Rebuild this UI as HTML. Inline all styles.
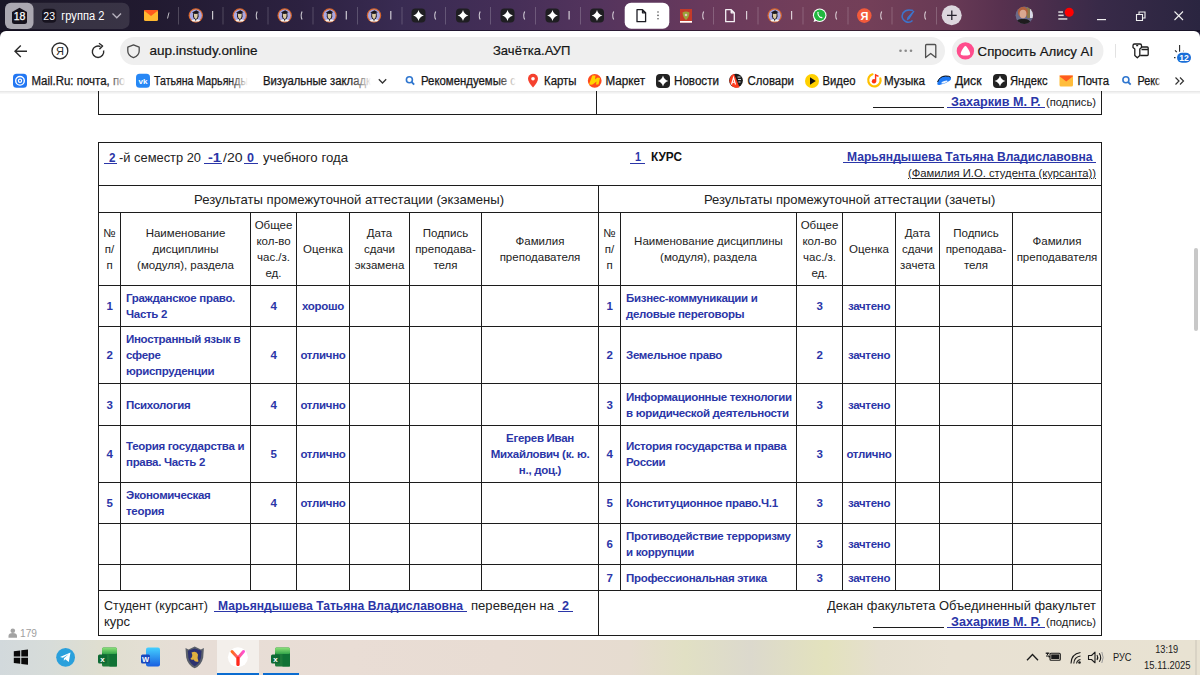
<!DOCTYPE html>
<html><head><meta charset="utf-8">
<style>
*{box-sizing:border-box}
html,body{margin:0;padding:0}
body{width:1200px;height:675px;overflow:hidden;position:relative;background:#fff;font-family:"Liberation Sans",sans-serif;color:#222}
.a{position:absolute}
.t{position:absolute;white-space:nowrap;line-height:20px;font-family:"Liberation Sans",sans-serif}
#tabs{left:0;top:0;width:1200px;height:44px;background:linear-gradient(90deg,#1b1727 0.00%,#211a30 12.50%,#2c2140 25.00%,#392b52 33.33%,#442e57 41.67%,#54345d 50.00%,#68395c 58.33%,#723e5a 66.67%,#733f58 72.50%,#683a55 79.17%,#58314f 83.33%,#382a48 91.67%,#2a2540 100.00%)}
#chrome{left:0;top:31px;width:1200px;height:60px;background:#fff;border-radius:6px 6px 0 0}
#bmline{left:0;top:91px;width:1200px;height:3px;background:linear-gradient(#e4e4e4,#f1f1f1 50%,#fafafa)}
.hl{position:absolute;height:1px;background:#1c1c1c}
.vl{position:absolute;width:1px;background:#1c1c1c}
.c{position:absolute;display:flex;align-items:center;justify-content:center;text-align:center;color:#222}
.hd{font-size:11.5px;line-height:16px}
.b{color:#2b36a8;font-weight:bold;font-size:11.5px;line-height:16px;letter-spacing:-0.3px}
.l{justify-content:flex-start;text-align:left;padding-left:5px}
#task{left:0;top:640px;width:1200px;height:35px;background:linear-gradient(90deg,#d9dde0 0%,#dcddd6 15%,#e3dfd2 35%,#e6e2d4 55%,#e2ddd0 75%,#ddd8cc 100%)}
</style></head><body>
<div id="tabs" class="a"></div>
<div class="a" style="left:0;top:29.5px;width:1200px;height:2px;background:rgba(10,5,20,.55)"></div>
<div id="chrome" class="a"></div>
<div id="bmline" class="a"></div>
<svg class="a" style="left:0;top:0" width="1200" height="92" viewBox="0 0 1200 92" font-family="Liberation Sans, sans-serif"><rect x="20" y="2.7" width="109.5" height="26.2" rx="7" fill="#fff" fill-opacity="0.115"/>
<rect x="5" y="2.7" width="28.5" height="26.2" rx="6" fill="#aba8b1"/>
<path d="M12,12 L19.5,7.8 L27,12 V21.5 Q27,24 24.5,24 H14.5 Q12,24 12,21.5Z" fill="#16121d"/>
<text x="19.6" y="20" font-size="10.5" fill="#fff" stroke="#fff" stroke-width="0.25" text-anchor="middle">18</text>
<rect x="42" y="8.8" width="14.3" height="14" rx="4" fill="#17131f"/>
<text x="49.2" y="20.2" font-size="10.5" fill="#fff" text-anchor="middle">23</text>
<text x="61.3" y="20.3" font-size="12.5" fill="#fff" textLength="43" lengthAdjust="spacingAndGlyphs">группа 2</text>
<path d="M112.5,13.5 L116.8,17.8 L121,13.5" stroke="#b9b4c0" stroke-width="1.3" fill="none"/>
<rect x="144" y="10" width="14" height="11" rx="1.5" fill="#ffb830"/><path d="M144,10.5 L151,16 L158,10.5 V10 H144Z" fill="#ff5a1e"/>
<path d="M167.5,18.5 L169,12.5" stroke="#fff" stroke-opacity="0.7" stroke-width="1"/>
<rect x="178" y="7" width="1" height="17.5" fill="#fff" fill-opacity="0.2"/>
<rect x="222.5" y="7" width="1" height="17.5" fill="#fff" fill-opacity="0.2"/>
<rect x="267.5" y="7" width="1" height="17.5" fill="#fff" fill-opacity="0.2"/>
<rect x="312.5" y="7" width="1" height="17.5" fill="#fff" fill-opacity="0.2"/>
<rect x="357" y="7" width="1" height="17.5" fill="#fff" fill-opacity="0.2"/>
<rect x="401.5" y="7" width="1" height="17.5" fill="#fff" fill-opacity="0.2"/>
<rect x="445" y="7" width="1" height="17.5" fill="#fff" fill-opacity="0.2"/>
<rect x="490" y="7" width="1" height="17.5" fill="#fff" fill-opacity="0.2"/>
<rect x="535" y="7" width="1" height="17.5" fill="#fff" fill-opacity="0.2"/>
<rect x="580" y="7" width="1" height="17.5" fill="#fff" fill-opacity="0.2"/>
<rect x="713" y="7" width="1" height="17.5" fill="#fff" fill-opacity="0.2"/>
<rect x="757.5" y="7" width="1" height="17.5" fill="#fff" fill-opacity="0.2"/>
<rect x="802.5" y="7" width="1" height="17.5" fill="#fff" fill-opacity="0.2"/>
<rect x="847.5" y="7" width="1" height="17.5" fill="#fff" fill-opacity="0.2"/>
<rect x="891.5" y="7" width="1" height="17.5" fill="#fff" fill-opacity="0.2"/>
<rect x="936" y="7" width="1" height="17.5" fill="#fff" fill-opacity="0.2"/>
<g transform="translate(195.8,15.5)"><circle r="7.2" fill="#d8662c"/><circle r="6" fill="#a9a8e4"/>
<path d="M-2.6,-2.5 L2.6,-2.5 L2.8,1 Q2.5,3.8 0,4 Q-2.5,3.8 -2.8,1Z" fill="#1e1a22"/><path d="M-1.9,-1.8 Q-2,3.2 0,3.4 Q2,3.2 1.9,-1.8Z" fill="#dcc9a2"/><path d="M-3.8,-3 L0.5,-5.3 L3.8,-3.3 L0,-1.8Z" fill="#1a161e"/>
<path d="M-4.5,4.8 Q0,2.6 4.5,4.8 L3,6 L-3,6Z" fill="#f2f2f2"/><path d="M-0.8,3.6 L0,6 L0.8,3.6Z" fill="#222"/></g>
<rect x="212.0" y="11" width="1.2" height="8.5" fill="#fff" fill-opacity="0.75"/>
<g transform="translate(239.8,15.5)"><circle r="7.2" fill="#d8662c"/><circle r="6" fill="#a9a8e4"/>
<path d="M-2.6,-2.5 L2.6,-2.5 L2.8,1 Q2.5,3.8 0,4 Q-2.5,3.8 -2.8,1Z" fill="#1e1a22"/><path d="M-1.9,-1.8 Q-2,3.2 0,3.4 Q2,3.2 1.9,-1.8Z" fill="#dcc9a2"/><path d="M-3.8,-3 L0.5,-5.3 L3.8,-3.3 L0,-1.8Z" fill="#1a161e"/>
<path d="M-4.5,4.8 Q0,2.6 4.5,4.8 L3,6 L-3,6Z" fill="#f2f2f2"/><path d="M-0.8,3.6 L0,6 L0.8,3.6Z" fill="#222"/></g>
<path d="M257.2,11.5 Q255.2,15.5 257.2,19.5" stroke="#fff" stroke-opacity="0.75" stroke-width="1.1" fill="none"/>
<g transform="translate(284.7,15.5)"><circle r="7.2" fill="#d8662c"/><circle r="6" fill="#a9a8e4"/>
<path d="M-2.6,-2.5 L2.6,-2.5 L2.8,1 Q2.5,3.8 0,4 Q-2.5,3.8 -2.8,1Z" fill="#1e1a22"/><path d="M-1.9,-1.8 Q-2,3.2 0,3.4 Q2,3.2 1.9,-1.8Z" fill="#dcc9a2"/><path d="M-3.8,-3 L0.5,-5.3 L3.8,-3.3 L0,-1.8Z" fill="#1a161e"/>
<path d="M-4.5,4.8 Q0,2.6 4.5,4.8 L3,6 L-3,6Z" fill="#f2f2f2"/><path d="M-0.8,3.6 L0,6 L0.8,3.6Z" fill="#222"/></g>
<path d="M302.09999999999997,11.5 Q300.09999999999997,15.5 302.09999999999997,19.5" stroke="#fff" stroke-opacity="0.75" stroke-width="1.1" fill="none"/>
<g transform="translate(329.5,15.5)"><circle r="7.2" fill="#d8662c"/><circle r="6" fill="#a9a8e4"/>
<path d="M-2.6,-2.5 L2.6,-2.5 L2.8,1 Q2.5,3.8 0,4 Q-2.5,3.8 -2.8,1Z" fill="#1e1a22"/><path d="M-1.9,-1.8 Q-2,3.2 0,3.4 Q2,3.2 1.9,-1.8Z" fill="#dcc9a2"/><path d="M-3.8,-3 L0.5,-5.3 L3.8,-3.3 L0,-1.8Z" fill="#1a161e"/>
<path d="M-4.5,4.8 Q0,2.6 4.5,4.8 L3,6 L-3,6Z" fill="#f2f2f2"/><path d="M-0.8,3.6 L0,6 L0.8,3.6Z" fill="#222"/></g>
<rect x="345.7" y="11" width="1.2" height="8.5" fill="#fff" fill-opacity="0.75"/>
<g transform="translate(374,15.5)"><circle r="7.2" fill="#d8662c"/><circle r="6" fill="#a9a8e4"/>
<path d="M-2.6,-2.5 L2.6,-2.5 L2.8,1 Q2.5,3.8 0,4 Q-2.5,3.8 -2.8,1Z" fill="#1e1a22"/><path d="M-1.9,-1.8 Q-2,3.2 0,3.4 Q2,3.2 1.9,-1.8Z" fill="#dcc9a2"/><path d="M-3.8,-3 L0.5,-5.3 L3.8,-3.3 L0,-1.8Z" fill="#1a161e"/>
<path d="M-4.5,4.8 Q0,2.6 4.5,4.8 L3,6 L-3,6Z" fill="#f2f2f2"/><path d="M-0.8,3.6 L0,6 L0.8,3.6Z" fill="#222"/></g>
<rect x="390.2" y="11" width="1.2" height="8.5" fill="#fff" fill-opacity="0.75"/>
<rect x="411.5" y="8.5" width="14" height="14" rx="3.9" fill="#1f1e22"/>
<path d="M418.5,10.1 Q419.6,14.4 423.9,15.5 Q419.6,16.6 418.5,20.9 Q417.4,16.6 413.1,15.5 Q417.4,14.4 418.5,10.1Z" fill="#fff"/>
<path d="M435.7,11.5 Q433.7,15.5 435.7,19.5" stroke="#fff" stroke-opacity="0.75" stroke-width="1.1" fill="none"/>
<rect x="456" y="8.5" width="14" height="14" rx="3.9" fill="#1f1e22"/>
<path d="M463,10.1 Q464.1,14.4 468.4,15.5 Q464.1,16.6 463,20.9 Q461.9,16.6 457.6,15.5 Q461.9,14.4 463,10.1Z" fill="#fff"/>
<path d="M480.2,11.5 Q478.2,15.5 480.2,19.5" stroke="#fff" stroke-opacity="0.75" stroke-width="1.1" fill="none"/>
<rect x="500.5" y="8.5" width="14" height="14" rx="3.9" fill="#1f1e22"/>
<path d="M507.5,10.1 Q508.6,14.4 512.9,15.5 Q508.6,16.6 507.5,20.9 Q506.4,16.6 502.1,15.5 Q506.4,14.4 507.5,10.1Z" fill="#fff"/>
<path d="M524.7,11.5 Q522.7,15.5 524.7,19.5" stroke="#fff" stroke-opacity="0.75" stroke-width="1.1" fill="none"/>
<rect x="545.5" y="8.5" width="14" height="14" rx="3.9" fill="#1f1e22"/>
<path d="M552.5,10.1 Q553.6,14.4 557.9,15.5 Q553.6,16.6 552.5,20.9 Q551.4,16.6 547.1,15.5 Q551.4,14.4 552.5,10.1Z" fill="#fff"/>
<rect x="568.5" y="11" width="1.2" height="8.5" fill="#fff" fill-opacity="0.75"/>
<rect x="590" y="8.5" width="14" height="14" rx="3.9" fill="#1f1e22"/>
<path d="M597,10.1 Q598.1,14.4 602.4,15.5 Q598.1,16.6 597,20.9 Q595.9,16.6 591.6,15.5 Q595.9,14.4 597,10.1Z" fill="#fff"/>
<path d="M613.7,11.5 Q611.7,15.5 613.7,19.5" stroke="#fff" stroke-opacity="0.75" stroke-width="1.1" fill="none"/>
<rect x="624.7" y="2.7" width="44.6" height="26" rx="6.5" fill="#fff"/>
<path d="M637.0,9.7 H642.5 L645.6,12.799999999999999 V21.7 H637.0Z M642.5,9.7 V12.799999999999999 H645.6" stroke="#1d1d24" stroke-width="1.3" fill="none" stroke-linejoin="round"/>
<circle cx="658" cy="12" r="0.8" fill="#555"/><circle cx="658" cy="15.4" r="0.8" fill="#555"/><circle cx="658" cy="18.8" r="0.8" fill="#555"/>
<rect x="680" y="9" width="12" height="13.7" fill="#c33a2a"/><path d="M682.5,12.5 Q686,10.5 689.5,12.5 Q689,18 686,20 Q683,18 682.5,12.5Z" fill="#9aa23a"/><circle cx="686" cy="15" r="1.3" fill="#e8c0c0"/><rect x="680" y="21" width="12" height="1.7" fill="#fff"/>
<path d="M703.7,11.5 Q701.7,15.5 703.7,19.5" stroke="#fff" stroke-opacity="0.75" stroke-width="1.1" fill="none"/>
<path d="M725.7,9.7 H731.2 L734.3000000000001,12.799999999999999 V21.7 H725.7Z M731.2,9.7 V12.799999999999999 H734.3000000000001" stroke="#f4f0f4" stroke-width="1.3" fill="none" stroke-linejoin="round"/>
<rect x="746" y="11" width="1.2" height="8.5" fill="#fff" fill-opacity="0.75"/>
<g transform="translate(774.7,15.5)"><circle r="7.2" fill="#d8662c"/><circle r="6" fill="#a9a8e4"/>
<path d="M-2.6,-2.5 L2.6,-2.5 L2.8,1 Q2.5,3.8 0,4 Q-2.5,3.8 -2.8,1Z" fill="#1e1a22"/><path d="M-1.9,-1.8 Q-2,3.2 0,3.4 Q2,3.2 1.9,-1.8Z" fill="#dcc9a2"/><path d="M-3.8,-3 L0.5,-5.3 L3.8,-3.3 L0,-1.8Z" fill="#1a161e"/>
<path d="M-4.5,4.8 Q0,2.6 4.5,4.8 L3,6 L-3,6Z" fill="#f2f2f2"/><path d="M-0.8,3.6 L0,6 L0.8,3.6Z" fill="#222"/></g>
<rect x="791" y="11" width="1.2" height="8.5" fill="#fff" fill-opacity="0.75"/>
<circle cx="819.7" cy="15.3" r="6.8" fill="#fff"/><circle cx="819.7" cy="15.3" r="5.7" fill="#22b73f"/><path d="M813.5,22 L814.7,18.5 L817,20.8Z" fill="#fff"/><path d="M817.3,12.3 Q817,15.6 819.5,17.6 Q821.5,18.8 822.6,18 L822,16.8 L820.8,17 Q818.6,15.5 818.4,13.5 L818.8,12.6 L818,11.8Z" fill="#fff"/>
<path d="M836.7,11.5 Q834.7,15.5 836.7,19.5" stroke="#fff" stroke-opacity="0.75" stroke-width="1.1" fill="none"/>
<circle cx="864.3" cy="15.6" r="7.3" fill="#f35a3b"/><text x="864.5" y="19.8" font-size="11" font-weight="bold" fill="#fff" text-anchor="middle">Я</text>
<path d="M881.7,11.5 Q879.7,15.5 881.7,19.5" stroke="#fff" stroke-opacity="0.75" stroke-width="1.1" fill="none"/>
<path d="M913,10.5 Q906,8.5 903,13 Q900.5,18.5 905.5,21.5 Q909.5,23.5 912.5,20.5" stroke="#3d74cc" stroke-width="1.5" fill="none"/><path d="M914,11 L909,18.5 L907.5,19.5 L908,17.5Z" fill="#3d74cc" stroke="#3d74cc" stroke-width="1.2"/>
<path d="M925.7,11.5 Q923.7,15.5 925.7,19.5" stroke="#fff" stroke-opacity="0.75" stroke-width="1.1" fill="none"/>
<circle cx="951.7" cy="15.3" r="10" fill="#dcd7de"/><path d="M947,15.3 H956.7 M951.8,10.6 V20" stroke="#25232d" stroke-width="1.3"/>
<defs><clipPath id="pfc"><circle cx="1024.3" cy="15.3" r="8.7"/></clipPath></defs><g clip-path="url(#pfc)"><rect x="1015" y="6" width="19" height="19" fill="#6a6a8a"/><rect x="1027" y="6" width="8" height="12" fill="#8a7a4a"/><rect x="1030" y="9" width="5" height="9" fill="#d8d8e8"/><ellipse cx="1022.8" cy="12" rx="5" ry="5.6" fill="#b0603e"/><ellipse cx="1023" cy="14" rx="3.4" ry="4.2" fill="#d9a890"/><path d="M1015,25 Q1016,18 1023,19 Q1030,18 1032,25Z" fill="#1e1c1e"/></g>
<rect x="1058.3" y="11.3" width="4.7" height="1.5" fill="#ddd"/><rect x="1058.3" y="14.6" width="5.4" height="1.5" fill="#ddd"/><rect x="1058.3" y="18.2" width="9" height="1.5" fill="#ddd"/><circle cx="1069.2" cy="12.3" r="4.5" fill="#ff0000"/>
<rect x="1097" y="19" width="9" height="1.2" fill="#f0f0f0"/>
<path d="M1136.5,14.5 H1142.5 V20.5 H1136.5Z M1139,14.5 V12 H1145 V18 H1142.5" stroke="#f0f0f0" stroke-width="1.1" fill="none"/>
<path d="M1174.5,11.5 L1183,20 M1183,11.5 L1174.5,20" stroke="#f0f0f0" stroke-width="1.1"/>
<path d="M15,51.3 H27 M20.8,45.6 L15,51.3 L20.8,57" stroke="#2b2b2b" stroke-width="1.4" fill="none"/>
<circle cx="59.9" cy="50.9" r="7.9" stroke="#2b2b2b" stroke-width="1.3" fill="none"/><text x="60" y="55.2" font-size="11" fill="#2b2b2b" text-anchor="middle">Я</text>
<path d="M103.6,50.5 A5.7,5.7 0 1 1 100.5,46.6" stroke="#2b2b2b" stroke-width="1.4" fill="none"/><path d="M99,43.3 L102.6,46 L99.4,49.2" stroke="#2b2b2b" stroke-width="1.4" fill="none" stroke-linejoin="round"/>
<rect x="120" y="37" width="825" height="28" rx="14" fill="#efefef"/>
<path d="M127.8,47.2 L133.5,44.8 L139.2,47.2 L139.2,51 Q139.2,55.6 133.5,57.6 Q127.8,55.6 127.8,51Z" stroke="#4a4a4a" stroke-width="1.3" fill="none" stroke-linejoin="round"/>
<text x="149.5" y="55" font-size="13.3" fill="#151515" stroke="#151515" stroke-width="0.2" textLength="108" lengthAdjust="spacingAndGlyphs">aup.instudy.online</text>
<text x="493" y="55" font-size="13.3" fill="#151515" stroke="#151515" stroke-width="0.2" textLength="77.5" lengthAdjust="spacingAndGlyphs">Зачётка.АУП</text>
<circle cx="900.5" cy="50.7" r="1.3" fill="#8a8a8a"/><circle cx="905.7" cy="50.7" r="1.3" fill="#8a8a8a"/><circle cx="911" cy="50.7" r="1.3" fill="#8a8a8a"/>
<path d="M925.6,57.6 V45.5 Q925.6,44.5 926.6,44.5 H934.8 Q935.8,44.5 935.8,45.5 V57.6 L930.7,53.5Z" stroke="#505050" stroke-width="1.3" fill="none" stroke-linejoin="round"/>
<rect x="952" y="37" width="151.5" height="28" rx="14" fill="#efefef"/>
<circle cx="965.4" cy="50.9" r="8.7" fill="#ff4d8d"/><path d="M965.4,46 Q966.6,46 969.2,50.8 Q971,54.6 969.4,55 Q965.4,56.2 961.4,55 Q959.8,54.6 961.6,50.8 Q964.2,46 965.4,46Z" fill="#fff"/>
<text x="977.6" y="55.5" font-size="13.5" fill="#151515" stroke="#151515" stroke-width="0.2" textLength="115.5" lengthAdjust="spacingAndGlyphs">Спросить Алису AI</text>
<rect x="1115" y="44" width="1" height="13.7" fill="#e2e2e2"/>
<path d="M1134.5,44 H1140 Q1141.5,44 1141.5,45.5 V47.5 L1139.8,49 V55.5 L1137.3,57.8 L1134.8,55.5 V49 L1133,47.5 V45.5 Q1133,44 1134.5,44Z M1136.2,45.6 H1138.2" stroke="#1c1c1c" stroke-width="1.3" fill="none" stroke-linejoin="round"/><path d="M1141.5,47 H1147.3 Q1148.2,47 1148.2,48 V54.5 Q1148.2,55.5 1147.3,55.5 H1140.2 M1141.5,49.5 H1148" stroke="#1c1c1c" stroke-width="1.3" fill="none"/>
<path d="M1179.6,45 V51.8 M1175,50.3 L1176.8,52.2 M1174,57.6 H1175.5 M1183.5,51 H1184" stroke="#2a2a2a" stroke-width="1.1"/>
<rect x="1177" y="52.7" width="14" height="10" rx="5" fill="#1a6ed8"/><text x="1184" y="60.9" font-size="8.6" font-weight="bold" fill="#fff" text-anchor="middle">12</text>
<rect x="13" y="73.8" width="14" height="14" rx="3.5" fill="#2277f3"/><circle cx="20" cy="80.8" r="4.3" stroke="#fff" stroke-width="1.4" fill="none"/><circle cx="20" cy="80.8" r="1.6" stroke="#fff" stroke-width="1.2" fill="none"/>
<defs><linearGradient id="f1" gradientUnits="userSpaceOnUse" x1="106.7" y1="0" x2="125.5" y2="0"><stop offset="0" stop-color="#151515"/><stop offset="1" stop-color="#151515" stop-opacity="0"/></linearGradient></defs><text x="31.5" y="85.3" font-size="12" fill="url(#f1)" stroke="url(#f1)" stroke-width="0.25" textLength="94" lengthAdjust="spacingAndGlyphs">Mail.Ru: почта, по</text>
<rect x="136" y="73.8" width="14" height="14" rx="3.5" fill="#2787f5"/><text x="143" y="84" font-size="8" font-weight="bold" fill="#fff" text-anchor="middle">vk</text>
<defs><linearGradient id="f2" gradientUnits="userSpaceOnUse" x1="229.2" y1="0" x2="248" y2="0"><stop offset="0" stop-color="#151515"/><stop offset="1" stop-color="#151515" stop-opacity="0"/></linearGradient></defs><text x="154" y="85.3" font-size="12" fill="url(#f2)" stroke="url(#f2)" stroke-width="0.25" textLength="94" lengthAdjust="spacingAndGlyphs">Татьяна Марьянды</text>
<defs><linearGradient id="f3" gradientUnits="userSpaceOnUse" x1="349.4" y1="0" x2="371" y2="0"><stop offset="0" stop-color="#151515"/><stop offset="1" stop-color="#151515" stop-opacity="0"/></linearGradient></defs><text x="263" y="85.3" font-size="12" fill="url(#f3)" stroke="url(#f3)" stroke-width="0.25" textLength="108" lengthAdjust="spacingAndGlyphs">Визуальные закладк</text>
<path d="M378.8,79.3 L382.5,83 L386.2,79.3" stroke="#333" stroke-width="1.3" fill="none"/>
<circle cx="409.4" cy="79.8" r="3" stroke="#2f76cf" stroke-width="1.6" fill="none"/><path d="M411.6,82 L414.2,84.6" stroke="#2f76cf" stroke-width="1.8"/>
<defs><linearGradient id="f4" gradientUnits="userSpaceOnUse" x1="497.0" y1="0" x2="516" y2="0"><stop offset="0" stop-color="#151515"/><stop offset="1" stop-color="#151515" stop-opacity="0"/></linearGradient></defs><text x="421" y="85.3" font-size="12" fill="url(#f4)" stroke="url(#f4)" stroke-width="0.25" textLength="95" lengthAdjust="spacingAndGlyphs">Рекомендуемые с</text>
<path d="M533,87.5 Q528,82 528,78.8 A5,5 0 0 1 538,78.8 Q538,82 533,87.5Z" fill="#f5412e"/><circle cx="533" cy="78.8" r="1.8" fill="#fff"/>
<text x="544" y="85.3" font-size="12" fill="#151515" stroke="#151515" stroke-width="0.25" textLength="32.5" lengthAdjust="spacingAndGlyphs">Карты</text>
<circle cx="594.7" cy="80.8" r="6.9" fill="#ff4b1c"/><path d="M589,84.5 L592.3,75.5 L595.5,75.5 L595,79.5 L597.5,77.5 L600,78 L598.5,84.5 L596,84.5 L596.5,81.5 L594,83.5 L592,84.8Z" fill="#ffd400"/>
<text x="605.5" y="85.3" font-size="12" fill="#151515" stroke="#151515" stroke-width="0.25" textLength="39.5" lengthAdjust="spacingAndGlyphs">Маркет</text>
<rect x="656" y="74" width="14" height="14" rx="3.9" fill="#222"/>
<path d="M663,75.6 Q664.1,79.9 668.4,81 Q664.1,82.1 663,86.4 Q661.9,82.1 657.6,81 Q661.9,79.9 663,75.6Z" fill="#fff"/>
<text x="674" y="85.3" font-size="12" fill="#151515" stroke="#151515" stroke-width="0.25" textLength="45" lengthAdjust="spacingAndGlyphs">Новости</text>
<circle cx="736" cy="80.6" r="6.9" fill="#1c1c1c"/><path d="M734,73.8 L739.5,87.2 A6.9,6.9 0 0 1 734,73.8Z" fill="#ff3b1c"/><path d="M731.5,84.5 L733.5,77.5 L735.5,84.5 M732.3,82.3 H734.8" stroke="#fff" stroke-width="1.1" fill="none"/><path d="M737.5,77 H740.5 M738,79.5 H741 M738.5,82 H740.5" stroke="#cfd8dc" stroke-width="1"/>
<text x="747.5" y="85.3" font-size="12" fill="#151515" stroke="#151515" stroke-width="0.25" textLength="46.5" lengthAdjust="spacingAndGlyphs">Словари</text>
<circle cx="812" cy="81" r="7" fill="#ffd000"/><path d="M810,77.3 L815.8,81 L810,84.7Z" fill="#111"/>
<text x="822.5" y="85.3" font-size="12" fill="#151515" stroke="#151515" stroke-width="0.25" textLength="33" lengthAdjust="spacingAndGlyphs">Видео</text>
<path d="M872.5,74.3 A6.2,6.2 0 1 0 880.3,78.3" stroke="#ffc000" stroke-width="2.2" fill="none" stroke-linecap="round"/><circle cx="874" cy="81.2" r="2.2" fill="#ff3210"/><path d="M875.6,81 V74.8 L878.5,76.3" stroke="#ff3210" stroke-width="1.4" fill="none"/>
<text x="884" y="85.3" font-size="12" fill="#151515" stroke="#151515" stroke-width="0.25" textLength="41" lengthAdjust="spacingAndGlyphs">Музыка</text>
<path d="M937.3,83.5 Q938,77.5 944,76 Q950,75.5 951,77.5 Q951.5,79.5 950,80.5 Q946,83.8 939.5,85 Q937,85.2 937.3,83.5Z" fill="#1f7af5"/><path d="M937.6,82 Q939.5,76.3 945.5,76 Q949.5,76 950.5,77.2" stroke="#0a0a0a" stroke-width="1" fill="none"/><ellipse cx="944.5" cy="82" rx="3.3" ry="1.1" transform="rotate(-18 944.5 82)" fill="#fff" fill-opacity="0.9"/>
<text x="955" y="85.3" font-size="12" fill="#151515" stroke="#151515" stroke-width="0.25" textLength="26.5" lengthAdjust="spacingAndGlyphs">Диск</text>
<rect x="993" y="74" width="14" height="14" rx="3.9" fill="#222"/>
<path d="M1000,75.6 Q1001.1,79.9 1005.4,81 Q1001.1,82.1 1000,86.4 Q998.9,82.1 994.6,81 Q998.9,79.9 1000,75.6Z" fill="#fff"/>
<text x="1010" y="85.3" font-size="12" fill="#151515" stroke="#151515" stroke-width="0.25" textLength="37.5" lengthAdjust="spacingAndGlyphs">Яндекс</text>
<rect x="1059.5" y="75.5" width="13.5" height="11" rx="1.5" fill="#ffbd3b"/><path d="M1059.5,76.3 L1066.25,81.5 L1073,76.3 V75.5 H1059.5Z" fill="#ff5b1f"/>
<text x="1077.5" y="85.3" font-size="12" fill="#151515" stroke="#151515" stroke-width="0.25" textLength="31.5" lengthAdjust="spacingAndGlyphs">Почта</text>
<circle cx="1125.9" cy="79.8" r="3" stroke="#2f76cf" stroke-width="1.6" fill="none"/><path d="M1128.1,82 L1130.7,84.6" stroke="#2f76cf" stroke-width="1.8"/>
<defs><linearGradient id="f5" gradientUnits="userSpaceOnUse" x1="1155.9" y1="0" x2="1160.5" y2="0"><stop offset="0" stop-color="#151515"/><stop offset="1" stop-color="#151515" stop-opacity="0"/></linearGradient></defs><text x="1137.5" y="85.3" font-size="12" fill="url(#f5)" stroke="url(#f5)" stroke-width="0.25" textLength="23" lengthAdjust="spacingAndGlyphs">Рекс</text>
<path d="M1175.5,77.5 L1179,81 L1175.5,84.5 M1180,77.5 L1183.5,81 L1180,84.5" stroke="#333" stroke-width="1.2" fill="none"/></svg>
<div class="vl" style="left:98px;top:91px;height:24px"></div>
<div class="vl" style="left:596px;top:91px;height:24px"></div>
<div class="vl" style="left:1101px;top:91px;height:24px"></div>
<div class="hl" style="left:98px;top:114px;width:1004px"></div>
<div class="hl" style="left:98px;top:142px;width:1004px"></div>
<div class="hl" style="left:98px;top:185px;width:1004px"></div>
<div class="hl" style="left:98px;top:212px;width:1004px"></div>
<div class="hl" style="left:98px;top:285px;width:1004px"></div>
<div class="hl" style="left:98px;top:326px;width:1004px"></div>
<div class="hl" style="left:98px;top:383px;width:1004px"></div>
<div class="hl" style="left:98px;top:425px;width:1004px"></div>
<div class="hl" style="left:98px;top:482px;width:1004px"></div>
<div class="hl" style="left:98px;top:523px;width:1004px"></div>
<div class="hl" style="left:98px;top:564px;width:1004px"></div>
<div class="hl" style="left:98px;top:590px;width:1004px"></div>
<div class="hl" style="left:98px;top:635px;width:1004px"></div>
<div class="vl" style="left:98px;top:142px;height:494px"></div>
<div class="vl" style="left:1101px;top:142px;height:494px"></div>
<div class="vl" style="left:598px;top:185px;height:451px"></div>
<div class="vl" style="left:120px;top:212px;height:379px"></div>
<div class="vl" style="left:250px;top:212px;height:379px"></div>
<div class="vl" style="left:296px;top:212px;height:379px"></div>
<div class="vl" style="left:349px;top:212px;height:379px"></div>
<div class="vl" style="left:409px;top:212px;height:379px"></div>
<div class="vl" style="left:481px;top:212px;height:379px"></div>
<div class="vl" style="left:620px;top:212px;height:379px"></div>
<div class="vl" style="left:796px;top:212px;height:379px"></div>
<div class="vl" style="left:842px;top:212px;height:379px"></div>
<div class="vl" style="left:895px;top:212px;height:379px"></div>
<div class="vl" style="left:939px;top:212px;height:379px"></div>
<div class="vl" style="left:1012px;top:212px;height:379px"></div>
<div class="hl" style="left:873px;top:107px;width:71px"></div>
<div class="hl" style="left:947px;top:107px;width:98px;background:#2b36a8"></div>
<div class="t" style="left:951.00px;top:92.00px;font-size:12px;font-weight:bold;color:#2b36a8;transform:scaleX(1.0508);transform-origin:0 0;">Захаркив М. Р.</div>
<div class="t" style="left:1046.00px;top:92.00px;font-size:11.5px;color:#222;transform:scaleX(0.9777);transform-origin:0 0;">(подпись)</div>
<div class="hl" style="left:104px;top:163px;width:13px;background:#2b36a8"></div>
<div class="t" style="left:109.00px;top:147.50px;font-size:12px;font-weight:bold;color:#2b36a8;transform:scaleX(0.9720);transform-origin:0 0;">2</div>
<div class="t" style="left:118.50px;top:147.50px;font-size:13px;color:#222;transform:scaleX(0.9896);transform-origin:0 0;">-й семестр 20</div>
<div class="hl" style="left:204px;top:163px;width:18px;background:#2b36a8"></div>
<div class="t" style="left:208.00px;top:147.50px;font-size:12px;font-weight:bold;color:#2b36a8;transform:scaleX(1.2182);transform-origin:0 0;">-1</div>
<div class="t" style="left:223.00px;top:147.50px;font-size:13px;color:#222;transform:scaleX(1.0787);transform-origin:0 0;">/20</div>
<div class="hl" style="left:244px;top:163px;width:14px;background:#2b36a8"></div>
<div class="t" style="left:247.00px;top:147.50px;font-size:12px;font-weight:bold;color:#2b36a8;transform:scaleX(1.0467);transform-origin:0 0;">0</div>
<div class="t" style="left:263.00px;top:147.50px;font-size:13px;color:#222;transform:scaleX(1.0151);transform-origin:0 0;">учебного года</div>
<div class="hl" style="left:630px;top:163px;width:15px;background:#2b36a8"></div>
<div class="t" style="left:635.00px;top:147.00px;font-size:12px;font-weight:bold;color:#2b36a8;transform:scaleX(0.8972);transform-origin:0 0;">1</div>
<div class="t" style="left:650.50px;top:147.00px;font-size:12px;font-weight:bold;color:#111;transform:scaleX(0.9851);transform-origin:0 0;">КУРС</div>
<div class="hl" style="left:843px;top:162px;width:253px;background:#2b36a8"></div>
<div class="t" style="left:846.50px;top:146.50px;font-size:12px;font-weight:bold;color:#2b36a8;transform:scaleX(1.0080);transform-origin:0 0;">Марьяндышева Татьяна Владиславовна</div>
<div class="t" style="left:908.00px;top:163.00px;font-size:11.5px;color:#222;transform:scaleX(0.9789);transform-origin:0 0;"><u>(Фамилия И.О. студента (курсанта))</u></div>
<div class="t" style="left:194.00px;top:190.00px;font-size:13px;color:#222;transform:scaleX(1.0071);transform-origin:0 0;">Результаты промежуточной аттестации (экзамены)</div>
<div class="t" style="left:704.00px;top:190.00px;font-size:13px;color:#222;">Результаты промежуточной аттестации (зачеты)</div>
<div class="c hd" style="left:99px;top:213px;width:21px;height:72px">№<br>п/<br>п</div>
<div class="c hd" style="left:121px;top:213px;width:129px;height:72px">Наименование<br>дисциплины<br>(модуля), раздела</div>
<div class="c hd" style="left:251px;top:213px;width:45px;height:72px">Общее<br>кол-во<br>час./з.<br>ед.</div>
<div class="c hd" style="left:297px;top:213px;width:52px;height:72px">Оценка</div>
<div class="c hd" style="left:350px;top:213px;width:59px;height:72px">Дата<br>сдачи<br>экзамена</div>
<div class="c hd" style="left:410px;top:213px;width:71px;height:72px">Подпись<br>преподава-<br>теля</div>
<div class="c hd" style="left:482px;top:213px;width:116px;height:72px">Фамилия<br>преподавателя</div>
<div class="c hd" style="left:599px;top:213px;width:21px;height:72px">№<br>п/<br>п</div>
<div class="c hd" style="left:621px;top:213px;width:175px;height:72px">Наименование дисциплины<br>(модуля), раздела</div>
<div class="c hd" style="left:797px;top:213px;width:45px;height:72px">Общее<br>кол-во<br>час./з.<br>ед.</div>
<div class="c hd" style="left:843px;top:213px;width:52px;height:72px">Оценка</div>
<div class="c hd" style="left:896px;top:213px;width:43px;height:72px">Дата<br>сдачи<br>зачета</div>
<div class="c hd" style="left:940px;top:213px;width:72px;height:72px">Подпись<br>преподава-<br>теля</div>
<div class="c hd" style="left:1013px;top:213px;width:88px;height:72px">Фамилия<br>преподавателя</div>
<div class="c b" style="left:99px;top:286px;width:21px;height:40px">1</div>
<div class="c b l" style="left:121px;top:286px;width:129px;height:40px">Гражданское право.<br>Часть 2</div>
<div class="c b" style="left:251px;top:286px;width:45px;height:40px">4</div>
<div class="c b" style="left:297px;top:286px;width:52px;height:40px">хорошо</div>
<div class="c b" style="left:599px;top:286px;width:21px;height:40px">1</div>
<div class="c b l" style="left:621px;top:286px;width:175px;height:40px">Бизнес-коммуникации и<br>деловые переговоры</div>
<div class="c b" style="left:797px;top:286px;width:45px;height:40px">3</div>
<div class="c b" style="left:843px;top:286px;width:52px;height:40px">зачтено</div>
<div class="c b" style="left:99px;top:327px;width:21px;height:56px">2</div>
<div class="c b l" style="left:121px;top:327px;width:129px;height:56px">Иностранный язык в<br>сфере<br>юриспруденции</div>
<div class="c b" style="left:251px;top:327px;width:45px;height:56px">4</div>
<div class="c b" style="left:297px;top:327px;width:52px;height:56px">отлично</div>
<div class="c b" style="left:599px;top:327px;width:21px;height:56px">2</div>
<div class="c b l" style="left:621px;top:327px;width:175px;height:56px">Земельное право</div>
<div class="c b" style="left:797px;top:327px;width:45px;height:56px">2</div>
<div class="c b" style="left:843px;top:327px;width:52px;height:56px">зачтено</div>
<div class="c b" style="left:99px;top:384px;width:21px;height:41px">3</div>
<div class="c b l" style="left:121px;top:384px;width:129px;height:41px">Психология</div>
<div class="c b" style="left:251px;top:384px;width:45px;height:41px">4</div>
<div class="c b" style="left:297px;top:384px;width:52px;height:41px">отлично</div>
<div class="c b" style="left:599px;top:384px;width:21px;height:41px">3</div>
<div class="c b l" style="left:621px;top:384px;width:175px;height:41px">Информационные технологии<br>в юридической деятельности</div>
<div class="c b" style="left:797px;top:384px;width:45px;height:41px">3</div>
<div class="c b" style="left:843px;top:384px;width:52px;height:41px">зачтено</div>
<div class="c b" style="left:99px;top:426px;width:21px;height:56px">4</div>
<div class="c b l" style="left:121px;top:426px;width:129px;height:56px">Теория государства и<br>права. Часть 2</div>
<div class="c b" style="left:251px;top:426px;width:45px;height:56px">5</div>
<div class="c b" style="left:297px;top:426px;width:52px;height:56px">отлично</div>
<div class="c b" style="left:482px;top:426px;width:116px;height:56px">Егерев Иван<br>Михайлович (к. ю.<br>н., доц.)</div>
<div class="c b" style="left:599px;top:426px;width:21px;height:56px">4</div>
<div class="c b l" style="left:621px;top:426px;width:175px;height:56px">История государства и права<br>России</div>
<div class="c b" style="left:797px;top:426px;width:45px;height:56px">3</div>
<div class="c b" style="left:843px;top:426px;width:52px;height:56px">отлично</div>
<div class="c b" style="left:99px;top:483px;width:21px;height:40px">5</div>
<div class="c b l" style="left:121px;top:483px;width:129px;height:40px">Экономическая<br>теория</div>
<div class="c b" style="left:251px;top:483px;width:45px;height:40px">4</div>
<div class="c b" style="left:297px;top:483px;width:52px;height:40px">отлично</div>
<div class="c b" style="left:599px;top:483px;width:21px;height:40px">5</div>
<div class="c b l" style="left:621px;top:483px;width:175px;height:40px">Конституционное право.Ч.1</div>
<div class="c b" style="left:797px;top:483px;width:45px;height:40px">3</div>
<div class="c b" style="left:843px;top:483px;width:52px;height:40px">зачтено</div>
<div class="c b" style="left:599px;top:524px;width:21px;height:40px">6</div>
<div class="c b l" style="left:621px;top:524px;width:175px;height:40px">Противодействие терроризму<br>и коррупции</div>
<div class="c b" style="left:797px;top:524px;width:45px;height:40px">3</div>
<div class="c b" style="left:843px;top:524px;width:52px;height:40px">зачтено</div>
<div class="c b" style="left:599px;top:565px;width:21px;height:25px">7</div>
<div class="c b l" style="left:621px;top:565px;width:175px;height:25px">Профессиональная этика</div>
<div class="c b" style="left:797px;top:565px;width:45px;height:25px">3</div>
<div class="c b" style="left:843px;top:565px;width:52px;height:25px">зачтено</div>
<div class="t" style="left:104.00px;top:595.50px;font-size:13px;color:#222;transform:scaleX(0.9624);transform-origin:0 0;">Студент (курсант)</div>
<div class="hl" style="left:214px;top:611px;width:253px;background:#2b36a8"></div>
<div class="t" style="left:218.00px;top:595.50px;font-size:12px;font-weight:bold;color:#2b36a8;transform:scaleX(1.0060);transform-origin:0 0;">Марьяндышева Татьяна Владиславовна</div>
<div class="t" style="left:471.00px;top:595.50px;font-size:13px;color:#222;transform:scaleX(1.0066);transform-origin:0 0;">переведен на</div>
<div class="hl" style="left:558px;top:611px;width:15px;background:#2b36a8"></div>
<div class="t" style="left:562.00px;top:595.50px;font-size:12px;font-weight:bold;color:#2b36a8;transform:scaleX(1.0467);transform-origin:0 0;">2</div>
<div class="t" style="left:104.00px;top:612.00px;font-size:13px;color:#222;transform:scaleX(1.0030);transform-origin:0 0;">курс</div>
<div class="t" style="left:827.00px;top:595.50px;font-size:13px;color:#222;transform:scaleX(0.9944);transform-origin:0 0;">Декан факультета Объединенный факультет</div>
<div class="hl" style="left:873px;top:627px;width:71px"></div>
<div class="hl" style="left:947px;top:627px;width:98px;background:#2b36a8"></div>
<div class="t" style="left:951.00px;top:612.00px;font-size:12px;font-weight:bold;color:#2b36a8;transform:scaleX(1.0508);transform-origin:0 0;">Захаркив М. Р.</div>
<div class="t" style="left:1046.00px;top:612.00px;font-size:11.5px;color:#222;transform:scaleX(0.9777);transform-origin:0 0;">(подпись)</div>

<svg class="a" style="left:0;top:640px" width="1200" height="35" viewBox="0 0 1200 35" font-family="Liberation Sans, sans-serif"><defs>
<linearGradient id="tkbg" x1="0" y1="0" x2="1" y2="0"><stop offset="0.000" stop-color="#d2d9dc"/><stop offset="0.042" stop-color="#d7dcd9"/><stop offset="0.083" stop-color="#dfded0"/><stop offset="0.125" stop-color="#e4dfd4"/><stop offset="0.167" stop-color="#e7ddd6"/><stop offset="0.292" stop-color="#e9ddd5"/><stop offset="0.417" stop-color="#e8dcd3"/><stop offset="0.525" stop-color="#e6dcd0"/><stop offset="0.571" stop-color="#e1e0c4"/><stop offset="0.625" stop-color="#dcd9cd"/><stop offset="0.688" stop-color="#e3e2bd"/><stop offset="0.733" stop-color="#e5dfcf"/><stop offset="0.792" stop-color="#e8e1d3"/><stop offset="1.000" stop-color="#e8e2d2"/></linearGradient>
<linearGradient id="xl1" x1="0" y1="0" x2="0" y2="1"><stop offset="0" stop-color="#8fe27a"/><stop offset="1" stop-color="#33a54a"/></linearGradient>
<linearGradient id="wd1" x1="0" y1="0" x2="0" y2="1"><stop offset="0" stop-color="#44d0ff"/><stop offset="1" stop-color="#1a5fe0"/></linearGradient>
<linearGradient id="ya1" x1="0" y1="0" x2="1" y2="0"><stop offset="0" stop-color="#ff6a1a"/><stop offset="1" stop-color="#ff4fd0"/></linearGradient>
</defs>
<rect x="0" y="0" width="1200" height="35" fill="url(#tkbg)"/>
<path d="M13.8,11.3 L20.2,10.5 V16.6 H13.8Z M21.3,10.3 L28,9.5 V16.6 H21.3Z M13.8,17.7 H20.2 V23.8 L13.8,23Z M21.3,17.7 H28 V24.8 L21.3,24Z" fill="#0a0a0a"/>
<circle cx="65.6" cy="17.3" r="9.4" fill="#2aa0dc"/><path d="M60,17 L70.5,12.6 L68.8,22 L65.2,19.2 L63.8,20.8 L63.9,18.2 L68.5,14.2 L62.8,17.8Z" fill="#fff"/>
<rect x="102" y="7.5" width="15" height="19" rx="1.5" fill="#1d7a3a"/><rect x="102" y="7.5" width="15" height="6.5" rx="1.5" fill="url(#xl1)"/><rect x="109.5" y="14" width="7.5" height="12.5" fill="#107235"/><rect x="98" y="14.5" width="9" height="9" rx="1.5" fill="#0e6b34"/><text x="102.5" y="22.2" font-size="8" font-weight="bold" fill="#fff" text-anchor="middle">x</text>
<rect x="146" y="7.5" width="14" height="19" rx="2" fill="url(#wd1)"/><rect x="141" y="14.5" width="9" height="9" rx="1.5" fill="#1848c0"/><text x="145.5" y="22" font-size="7.5" font-weight="bold" fill="#fff" text-anchor="middle">W</text>
<path d="M185.5,8 L188.5,9.5 L194.7,6.5 L200.9,9.5 L203.9,8 L203.2,17.5 Q201.5,25.5 194.7,28.2 Q187.9,25.5 186.2,17.5Z" fill="#5a5f6a"/><path d="M187.8,10.8 L194.7,8.6 L201.6,10.8 L201,17.8 Q199.5,23.8 194.7,26.3 Q189.9,23.8 188.4,17.8Z" fill="#2d3270"/><path d="M191.5,12.5 Q196.5,10.5 198,14.5 Q197,17 198.5,21.5 Q195,22.5 193.5,19.5 Q191,20.5 190.5,18.5 Q193.5,16.5 191.5,12.5Z" fill="#e0b040"/>
<rect x="217" y="0" width="42" height="35" fill="#f3efeb"/><rect x="217" y="33" width="42" height="2" fill="#0b6cd0"/>
<circle cx="237.9" cy="17.3" r="10" fill="#fff"/><path d="M232,11.5 L238,18 V24.5 M238,18 L243.5,11.5" stroke="url(#ya1)" stroke-width="3" fill="none" stroke-linecap="round"/><path d="M238,18 V24.5" stroke="#ff2a1a" stroke-width="3" stroke-linecap="round"/>
<rect x="275" y="7.5" width="15" height="19" rx="1.5" fill="#1d7a3a"/><rect x="275" y="7.5" width="15" height="6.5" rx="1.5" fill="url(#xl1)"/><rect x="282.5" y="14" width="7.5" height="12.5" fill="#107235"/><rect x="271" y="14.5" width="9" height="9" rx="1.5" fill="#0e6b34"/><text x="275.5" y="22.2" font-size="8" font-weight="bold" fill="#fff" text-anchor="middle">x</text>
<rect x="263" y="33" width="36" height="2" fill="#0b6cd0"/>
<path d="M1027,20.3 L1032.5,14.5 L1038,20.3" stroke="#1a1a1a" stroke-width="1.3" fill="none"/>
<path d="M1046,16 H1049 M1047.5,12.5 V15 M1046.3,12.5 V14 M1048.7,12.5 V14" stroke="#1a1a1a" stroke-width="1.1"/><rect x="1050" y="13.2" width="10.3" height="7" rx="1" stroke="#1a1a1a" stroke-width="1.1" fill="none"/><rect x="1051.2" y="14.4" width="8" height="4.6" fill="#1a1a1a"/><rect x="1048.5" y="16" width="1.6" height="1.4" fill="#1a1a1a"/>
<path d="M1071,23.5 Q1071,14 1080.5,12.5 M1073.8,23.5 Q1074,17 1080.5,16 M1076.6,23.5 Q1077,20 1080.5,19.5" stroke="#1a1a1a" stroke-width="1.1" fill="none"/><circle cx="1079.5" cy="22.5" r="1.3" fill="#1a1a1a"/>
<path d="M1088.5,15.5 H1091.5 L1095,12.2 V22.8 L1091.5,19.5 H1088.5Z" stroke="#1a1a1a" stroke-width="1.1" fill="none" stroke-linejoin="round"/><path d="M1097,15 Q1098.5,17.5 1097,20 M1099.3,13.2 Q1102,17.5 1099.3,21.8" stroke="#1a1a1a" stroke-width="1.1" fill="none"/><path d="M1101.8,12 Q1104.5,17.5 1101.8,23" stroke="#999" stroke-width="1" fill="none"/>
<text x="1113" y="20.9" font-size="11.3" fill="#1a1a1a" textLength="18.5" lengthAdjust="spacingAndGlyphs">РУС</text>
<text x="1155.2" y="13.1" font-size="10.8" fill="#1a1a1a" textLength="23" lengthAdjust="spacingAndGlyphs">13:19</text>
<text x="1144" y="28.5" font-size="10.8" fill="#1a1a1a" textLength="46.6" lengthAdjust="spacingAndGlyphs">15.11.2025</text>
<rect x="1195.5" y="0" width="1" height="35" fill="#c9c4b8"/></svg><svg class="a" style="left:0;top:620px" width="60" height="20" viewBox="0 620 60 20" font-family="Liberation Sans, sans-serif"><circle cx="12.8" cy="630.8" r="2.3" fill="#a3a3a3"/><path d="M8.5,637.7 V636 Q8.5,633 12.8,633 Q17,633 17,636 V637.7Z" fill="#a3a3a3"/><text x="20" y="636.8" font-size="10.2" fill="#a0a0a0" textLength="17" lengthAdjust="spacingAndGlyphs">179</text></svg>
<div class="a" style="left:1194px;top:248px;width:4px;height:83px;border-radius:2px;background:#c8c8c8"></div>
</body></html>
